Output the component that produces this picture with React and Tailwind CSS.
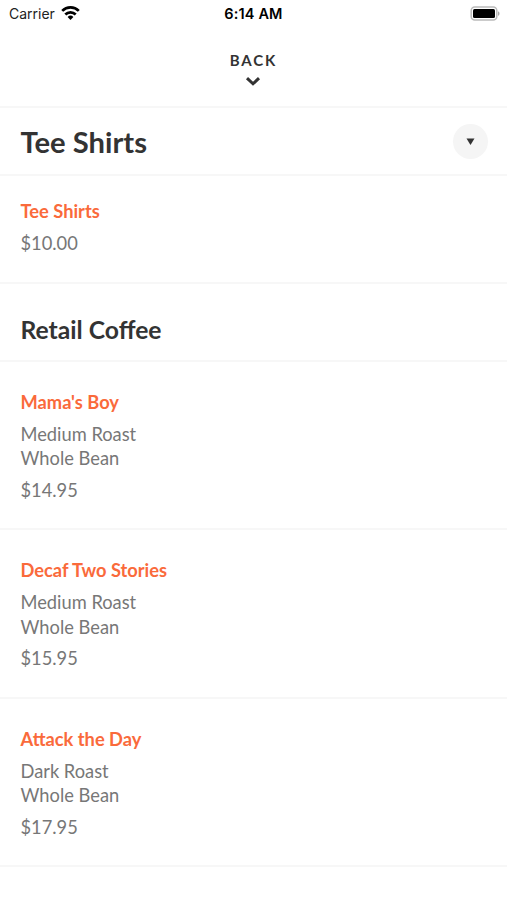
import React from 'react';

const coffees = [
  { name: "Mama's Boy", roast: 'Medium Roast', price: '$14.95' },
  { name: 'Decaf Two Stories', roast: 'Medium Roast', price: '$15.95' },
  { name: 'Attack the Day', roast: 'Dark Roast', price: '$17.95' },
];

function StatusBar() {
  return (
    <div className="grid h-7 grid-cols-3 items-center pl-[9px] pr-[7px] font-['Inter',sans-serif] text-[14px] text-black">
      <div className="flex items-center gap-1.5">
        <span className="-mt-0.5 text-[#222]">Carrier</span>
        <svg className="-mt-0.5" width="19" height="14" viewBox="0 0 19 14" fill="none" stroke="black" strokeWidth="2.7">
          <path d="M1.2 4.9a11.7 11.7 0 0 1 16.6 0" />
          <path d="M4.3 8.5a7.3 7.3 0 0 1 10.4 0" />
          <path d="M9.5 14L6.6 11a4.1 4.1 0 0 1 5.8 0z" fill="black" stroke="none" />
        </svg>
      </div>
      <span className="-ml-[2px] whitespace-nowrap text-center text-[14.5px] font-semibold leading-5 tracking-[0.15px]">6:14 AM</span>
      <svg className="-mt-0.5 justify-self-end" width="30" height="15" viewBox="0 0 30 15">
        <rect x="1.2" y="1" width="25.6" height="13" rx="3.5" fill="white" stroke="#bbb" strokeWidth="1.5" />
        <rect x="3" y="3" width="22" height="9" rx="1.5" fill="black" />
        <path d="M28 5.2c2 .8 2 3.8 0 4.6z" fill="#aaa" />
      </svg>
    </div>
  );
}

function Item({ name, roast, price }) {
  return (
    <div className="h-[168.5px] border-b-2 border-[#f7f7f7] pl-[20.5px] pt-[28px] text-[18.3px] leading-[24.5px] text-[#777]">
      <h3 className="font-bold text-[#fa6a3b]">{name}</h3>
      <p className="mt-[7.5px]">{roast}</p>
      <p>Whole Bean</p>
      <p className="mt-[7px]">{price}</p>
    </div>
  );
}

export default function App() {
  return (
    <div className="h-[900px] overflow-hidden bg-white font-['Lato',sans-serif] text-[#333]">
      <StatusBar />

      {/* Back button */}
      <div className="flex h-[80px] flex-col items-center border-b-2 border-[#f7f7f7] pr-px pt-[22px]">
        <span className="pl-[1px] text-[15px] font-bold leading-5 tracking-[1.9px]">BACK</span>
        <svg className="mt-1.5" width="16" height="11" viewBox="0 0 16 11" fill="none" stroke="#333" strokeWidth="3">
          <path d="M2 2.2l6 5.6 6-5.6" />
        </svg>
      </div>

      {/* Category selector */}
      <div className="flex h-[68px] items-center justify-between border-b-2 border-[#f7f7f7] pl-[20.5px] pr-[19px]">
        <h1 className="pt-px text-[29.2px] font-bold">Tee Shirts</h1>
        <button className="flex size-[35px] items-center justify-center rounded-full bg-[#f5f5f5]">
          <svg width="9" height="7" viewBox="0 0 9 7" fill="#333">
            <path d="M0.5 0.5h8l-4 6.5z" />
          </svg>
        </button>
      </div>

      <div className="h-[107.5px] border-b-2 border-[#f7f7f7] pl-[20.5px] pt-[23px] text-[18.3px] leading-[25px] text-[#777]">
        <h3 className="font-bold text-[#fa6a3b]">Tee Shirts</h3>
        <p className="mt-[7px]">$10.00</p>
      </div>

      <h2 className="h-[78px] border-b-2 border-[#f7f7f7] pl-[20.5px] pt-[30px] text-[24.7px] font-bold leading-8">Retail Coffee</h2>
      {coffees.map((coffee) => (
        <Item key={coffee.name} {...coffee} />
      ))}
    </div>
  );
}
